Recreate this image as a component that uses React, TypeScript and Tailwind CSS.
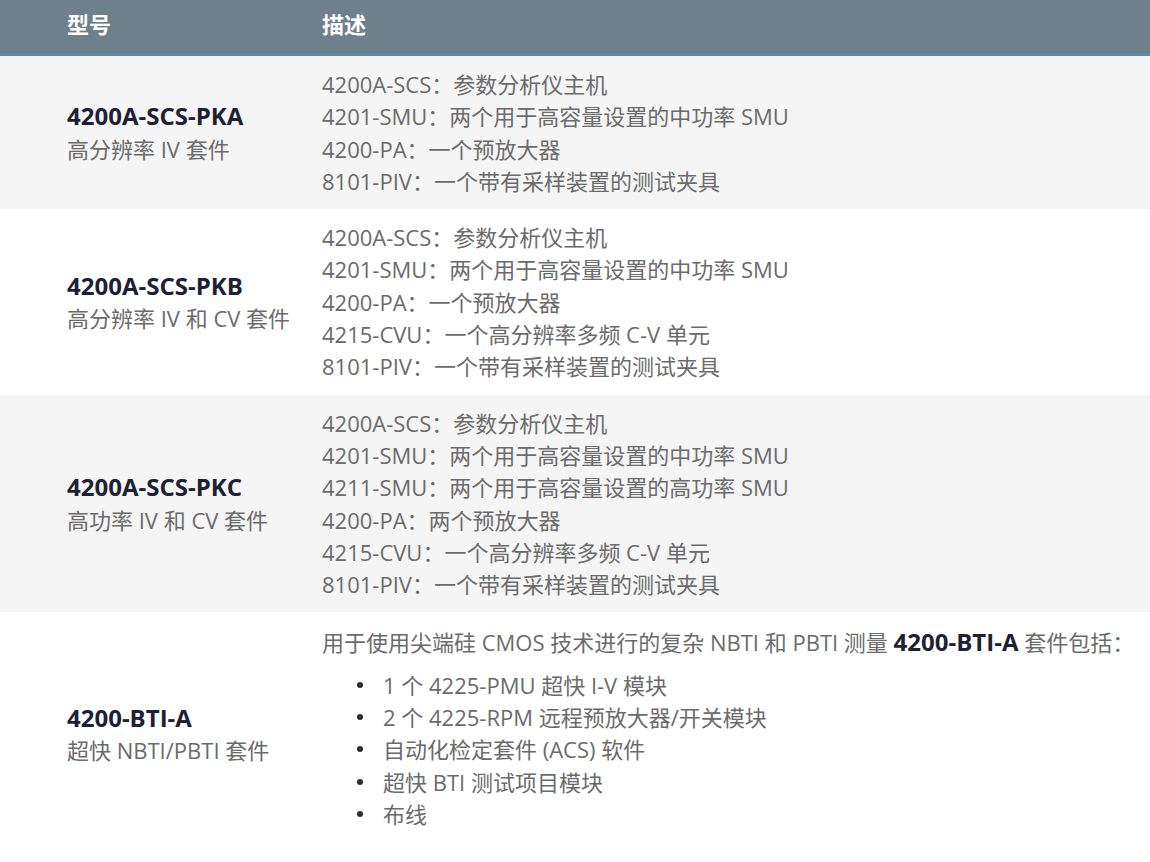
const rows = [
  {
    name: "4200A-SCS-PKA",
    sub: "高分辨率 IV 套件",
    lines: [
      "4200A-SCS：参数分析仪主机",
      "4201-SMU：两个用于高容量设置的中功率 SMU",
      "4200-PA：一个预放大器",
      "8101-PIV：一个带有采样装置的测试夹具",
    ],
  },
  {
    name: "4200A-SCS-PKB",
    sub: "高分辨率 IV 和 CV 套件",
    lines: [
      "4200A-SCS：参数分析仪主机",
      "4201-SMU：两个用于高容量设置的中功率 SMU",
      "4200-PA：一个预放大器",
      "4215-CVU：一个高分辨率多频 C-V 单元",
      "8101-PIV：一个带有采样装置的测试夹具",
    ],
  },
  {
    name: "4200A-SCS-PKC",
    sub: "高功率 IV 和 CV 套件",
    lines: [
      "4200A-SCS：参数分析仪主机",
      "4201-SMU：两个用于高容量设置的中功率 SMU",
      "4211-SMU：两个用于高容量设置的高功率 SMU",
      "4200-PA：两个预放大器",
      "4215-CVU：一个高分辨率多频 C-V 单元",
      "8101-PIV：一个带有采样装置的测试夹具",
    ],
  },
];

const btiItems = [
  "1 个 4225-PMU 超快 I-V 模块",
  "2 个 4225-RPM 远程预放大器/开关模块",
  "自动化检定套件 (ACS) 软件",
  "超快 BTI 测试项目模块",
  "布线",
];

const ModelCell: React.FC<{name: string; sub: string}> = ({name, sub}) => (
  <div className="w-[322px] shrink-0 pl-[67px] flex flex-col justify-center">
    <span className="font-bold text-[24px] text-[#1d2132]">{name}</span>
    <span>{sub}</span>
  </div>
);

export default function App() {
  return (
    <div
      className="w-[1150px] h-[862px] overflow-hidden bg-white text-[22px] leading-[32.3px] text-[#6b6b6b]"
      style={{fontFamily: '"Open Sans", "Noto Sans CJK SC", sans-serif'}}
    >
      <div className="flex h-[56px] items-center bg-[#6f808d] border-b-[3px] border-[#5a8ba8] pb-[4px] font-bold text-white">
        <div className="w-[322px] pl-[67px]">型号</div>
        <div>描述</div>
      </div>

      {rows.map((row, i) => (
        <div
          key={row.name}
          className={`flex ${i % 2 === 0 ? "bg-[#f5f5f5]" : "bg-white"}`}
        >
          <ModelCell name={row.name} sub={row.sub} />
          <div className="flex flex-col py-3">
            {row.lines.map((line) => (
              <span key={line}>{line}</span>
            ))}
          </div>
        </div>
      ))}

      <div className="flex bg-white">
        <ModelCell name="4200-BTI-A" sub="超快 NBTI/PBTI 套件" />
        <div className="flex flex-col pt-[14px] pb-[26px]">
          <p>
            用于使用尖端硅 CMOS 技术进行的复杂 NBTI 和 PBTI 测量{" "}
            <b className="text-[24px] text-[#1d2132]">4200-BTI-A</b> 套件包括：
          </p>
          <ul className="mt-[10px] flex flex-col">
            {btiItems.map((item) => (
              <li key={item} className="flex items-center">
                <span className="ml-[35px] mr-[20px] size-[6px] rounded-full bg-[#2e2e2e]" />
                <span>{item}</span>
              </li>
            ))}
          </ul>
        </div>
      </div>
    </div>
  );
}
